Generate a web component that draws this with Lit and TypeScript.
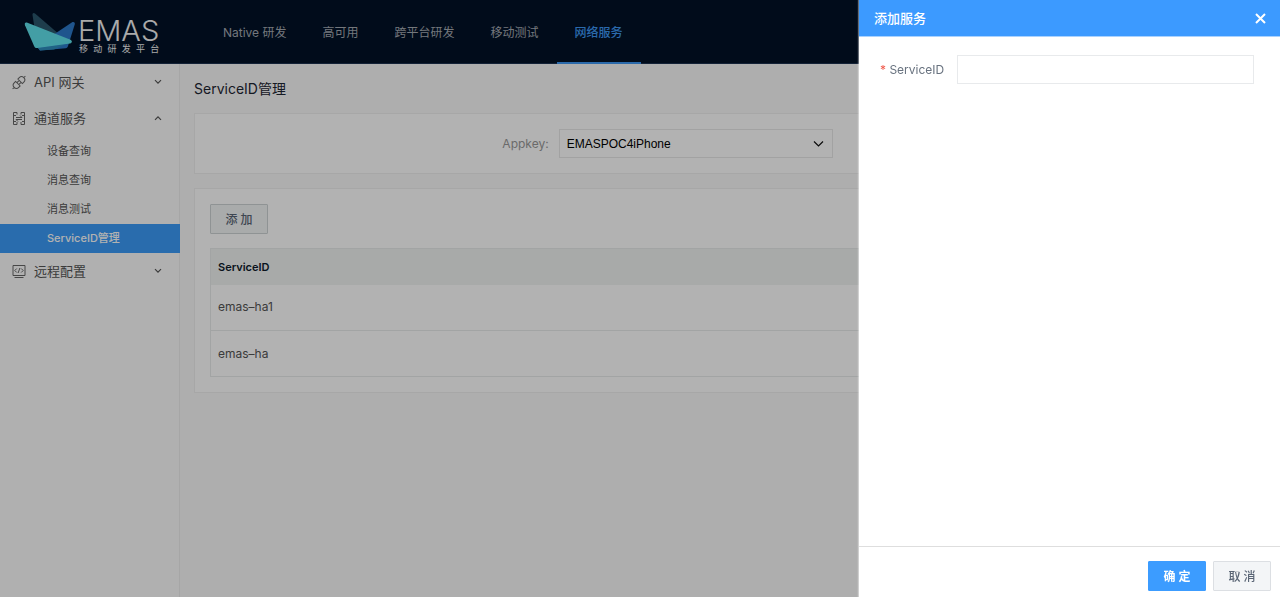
import { LitElement, html, svg, css, nothing } from "lit";
import { customElement, state } from "lit/decorators.js";

const NAV = ["Native 研发", "高可用", "跨平台研发", "移动测试", "网络服务"];
const SERVICES = ["emas–ha1", "emas–ha"];

const ICONS = {
  plug: svg`<g transform="translate(7 7.500) rotate(-45)"><path d="M-9 0h2.200M9 0H6.800M-1.600-3.200h-2A3.200 3.200 0 0 0-3.600 3.200h2zM1.600-3.200h2A3.200 3.200 0 0 1 3.600 3.200h-2zM-1.600-1.300h3.200M-1.600 1.300h3.200"/></g>`,
  channel: svg`<path d="M5 3.500V1.500H1.500v12H5v-2.500M9 3.500V1.500h3.500v12H9v-2.500M1.500 4.500h2.500M1.500 10.500h2.500M12.500 4.500H10M12.500 10.500H10M4 6.500h6L8 4.500M10 8.500H4l2 2"/>`,
  code: svg`<path d="M1 1.500h12v10H1zM2.500 13.500h9M4.800 4.500L2.800 6.500l2 2M9.200 4.500l2 2-2 2M7.900 4L6.100 9"/>`,
};

interface MenuGroup {
  label: string;
  icon: keyof typeof ICONS;
  items?: string[];
}

const MENU: MenuGroup[] = [
  { label: "API 网关", icon: "plug" },
  { label: "通道服务", icon: "channel", items: ["设备查询", "消息查询", "消息测试", "ServiceID管理"] },
  { label: "远程配置", icon: "code" },
];

@customElement("app-root")
export class AppRoot extends LitElement {
  @state() private drawerOpen = true;

  static styles = css`
    :host {
      display: block;
      font: 12px/18px "Inter", "Noto Sans CJK SC", sans-serif;
      color: #555;
    }
    * { box-sizing: border-box; }
    button, input, select { font: inherit; margin: 0; }
    a { color: inherit; text-decoration: none; }
    h1, h2, ul { margin: 0; padding: 0; font-weight: 400; list-style: none; }
    .page { min-height: 100vh; display: flex; flex-direction: column; background: #fafafa; }
    .header {
      display: flex;
      height: 64px;
      background: #021228;
      border-bottom: 1px solid #1c3250;
      flex: none;
    }
    .brand { display: flex; width: 205px; padding: 12px 0 0 24px; gap: 2px; flex: none; }
    .brand svg { width: 52px; height: 40px; flex: none; }
    .brand-text { padding-top: 6px; color: #f4f4f4; }
    .brand-name { font: 300 29px/26px "Inter", sans-serif; }
    .brand-sub { display: flex; justify-content: space-between; font-size: 9px; line-height: 10px; margin-left: 1px; }
    .nav { display: flex; }
    .nav a {
      padding: 0 18px;
      line-height: 66px;
      height: 64px;
      color: #a6abb2;
      white-space: nowrap;
    }
    .nav a.active { color: #3e99f5; border-bottom: 2px solid #3e99f5; font-weight: 500; }
    .body { display: flex; flex: 1; }
    .side { width: 180px; border-right: 1px solid #eee; background: #fdfdfd; flex: none; }
    .group {
      display: flex;
      align-items: center;
      width: 100%;
      height: 36px;
      padding: 0 17px 0 12px;
      gap: 8px;
      border: 0;
      background: none;
      color: #555;
      font-size: 13px;
      text-align: left;
    }
    .group span { flex: 1; }
    .icon { width: 14px; height: 15px; fill: none; stroke: #666; stroke-width: 1; overflow: visible; }
    .chev { width: 8px; height: 6px; fill: none; stroke: #555; stroke-width: 1.2; }
    .up { transform: rotate(180deg); }
    .sub { padding-top: 1px; }
    .sub a { display: block; padding-left: 47px; height: 29px; line-height: 29px; font-size: 11px; }
    .sub a.active { background: #3b9bf8; color: #fff; font-weight: 500; margin-right: -1px; }
    .main { flex: 1; min-width: 0; padding: 14px; display: flex; flex-direction: column; gap: 14px; }
    h1 { font-size: 14px; line-height: 21px; color: #1d2633; }
    .card { background: #fff; border: 1px solid #f0f0f0; padding: 15px; }
    .filter { display: flex; justify-content: center; align-items: center; gap: 10px; padding-right: 140px; }
    .filter label { color: #999; }
    .select { display: grid; width: 274px; align-items: center; }
    .select select {
      grid-area: 1 / 1;
      appearance: none;
      width: 100%;
      height: 29px;
      padding: 0 7px;
      border: 1px solid #e8e8e8;
      border-radius: 0;
      background: #fff;
      color: #000;
      font-family: "Liberation Sans", sans-serif;
    }
    .select svg {
      grid-area: 1 / 1;
      justify-self: end;
      margin-right: 9px;
      width: 11px;
      height: 8px;
      fill: none;
      stroke: #111;
      stroke-width: 1.2;
      pointer-events: none;
    }
    .btn {
      width: 58px;
      height: 30px;
      padding: 1px 0 0;
      border: 1px solid #dcdfe3;
      border-radius: 1px;
      background: #f3f5f7;
      color: #5a6575;
      font-weight: 500;
      font-size: 12px;
      white-space: pre;
    }
    .add { border-color: #cdd3d5; background: #f2f5f5; }
    .primary { background: #3c9cff; border-color: #3c9cff; color: #fff; font-weight: 700; }
    table { width: 100%; margin-top: 14px; border-collapse: collapse; border: 1px solid #e8ebeb; }
    th, td { padding: 0 7px; text-align: left; border-bottom: 1px solid #e8ebeb; }
    th { height: 36px; background: #f1f4f3; color: #0e1a2b; font-weight: 600; font-size: 11px; border: 0; }
    td { height: 46px; }
    .mask { position: fixed; inset: 0; background: rgba(0, 0, 0, 0.3); }
    .drawer {
      position: fixed;
      top: 0;
      right: 0;
      bottom: 0;
      width: 421px;
      display: flex;
      flex-direction: column;
      background: #fff;
      box-shadow: -1px 0 1px rgba(255, 255, 255, 0.4);
    }
    .drawer-head {
      display: flex;
      justify-content: space-between;
      align-items: center;
      height: 37px;
      padding: 0 14px 0 15px;
      background: #3c9aff;
      border-bottom: 1px solid #a9d2ff;
      color: #fff;
    }
    .drawer-head h2 { font-size: 13px; font-weight: 500; }
    .close { display: flex; padding: 0; border: 0; background: none; }
    .close svg { width: 11px; height: 11px; stroke: #fff; stroke-width: 2; }
    .form { flex: 1; padding: 18px 26px 0 21px; }
    .field { display: flex; align-items: center; }
    .field label { width: 77px; flex: none; color: #68727f; }
    .req { color: #f0584a; }
    .field input {
      flex: 1;
      min-width: 0;
      height: 29px;
      padding: 0 8px;
      border: 1px solid #e8eaec;
      border-radius: 0;
      outline: none;
    }
    .foot {
      display: flex;
      justify-content: flex-end;
      gap: 7px;
      height: 51px;
      padding: 14px 9px 0 0;
      border-top: 1px solid #dedede;
    }
  `;

  private chevron(up = false) {
    return html`<svg class="chev ${up ? "up" : ""}" viewBox="0 0 8 6"><path d="M1 1.200l3 3 3-3" /></svg>`;
  }

  private setDrawer(open: boolean) {
    this.drawerOpen = open;
  }

  render() {
    return html`
      <div class="page">
        <header class="header">
          <div class="brand">
            <svg viewBox="0 0 52 40" aria-hidden="true">
              <path d="M11 1.500L36 23 12 25 8.500 3C8.300 1 9.700 .4 11 1.500z" fill="#2c586d" />
              <path d="M48.500 10C50.300 9.600 51.200 10.800 50.800 12.200L44 34c-.5 1.300-1 2.200-2.300 2.300L16 38.500 14 36 23 27z" fill="#2d7acb" />
              <path d="M14 36l27-3.500L30 37.500 16 38.500z" fill="#2f8fbd" />
              <path d="M2.800 10.600L46.500 27.800c2 1 1.800 3.300-.5 3.700L13.500 36c-1.600.2-2.500-.3-3.200-1.600L1 13.200C.3 11.400 1.200 10.200 2.800 10.600z" fill="#61e3ec" />
            </svg>
            <div class="brand-text">
              <div class="brand-name">EMAS</div>
              <div class="brand-sub">${[..."移动研发平台"].map((c) => html`<span>${c}</span>`)}</div>
            </div>
          </div>
          <nav class="nav">
            ${NAV.map((n) => html`<a href="#" class=${n === "网络服务" ? "active" : ""}>${n}</a>`)}
          </nav>
        </header>
        <div class="body">
          <nav class="side">
            ${MENU.map(
              (g) => html`
                <button class="group">
                  <svg class="icon" viewBox="0 0 14 15">${ICONS[g.icon]}</svg>
                  <span>${g.label}</span>${this.chevron(!!g.items)}
                </button>
                ${g.items
                  ? html`<ul class="sub">
                      ${g.items.map((i) => html`<li><a href="#" class=${i === "ServiceID管理" ? "active" : ""}>${i}</a></li>`)}
                    </ul>`
                  : nothing}
              `
            )}
          </nav>
          <main class="main">
            <h1>ServiceID管理</h1>
            <section class="card filter">
              <label for="appkey">Appkey:</label>
              <div class="select">
                <select id="appkey"><option>EMASPOC4iPhone</option></select>
                <svg viewBox="0 0 11 8"><path d="M1 1.500l4.500 4.500L10 1.500" /></svg>
              </div>
            </section>
            <section class="card">
              <button class="btn add" @click=${() => this.setDrawer(true)}>添 加</button>
              <table>
                <thead><tr><th>ServiceID</th></tr></thead>
                <tbody>${SERVICES.map((s) => html`<tr><td>${s}</td></tr>`)}</tbody>
              </table>
            </section>
          </main>
        </div>
      </div>
      ${this.drawerOpen
        ? html`
            <div class="mask"></div>
            <aside class="drawer" role="dialog" aria-labelledby="title">
              <header class="drawer-head">
                <h2 id="title">添加服务</h2>
                <button class="close" aria-label="关闭" @click=${() => this.setDrawer(false)}>
                  <svg viewBox="0 0 11 11"><path d="M1 1l9 9M10 1l-9 9" /></svg>
                </button>
              </header>
              <div class="form">
                <div class="field">
                  <label for="sid"><span class="req">*</span> ServiceID</label>
                  <input id="sid" type="text" />
                </div>
              </div>
              <footer class="foot">
                <button class="btn primary">确 定</button>
                <button class="btn" @click=${() => this.setDrawer(false)}>取 消</button>
              </footer>
            </aside>
          `
        : nothing}
    `;
  }
}
